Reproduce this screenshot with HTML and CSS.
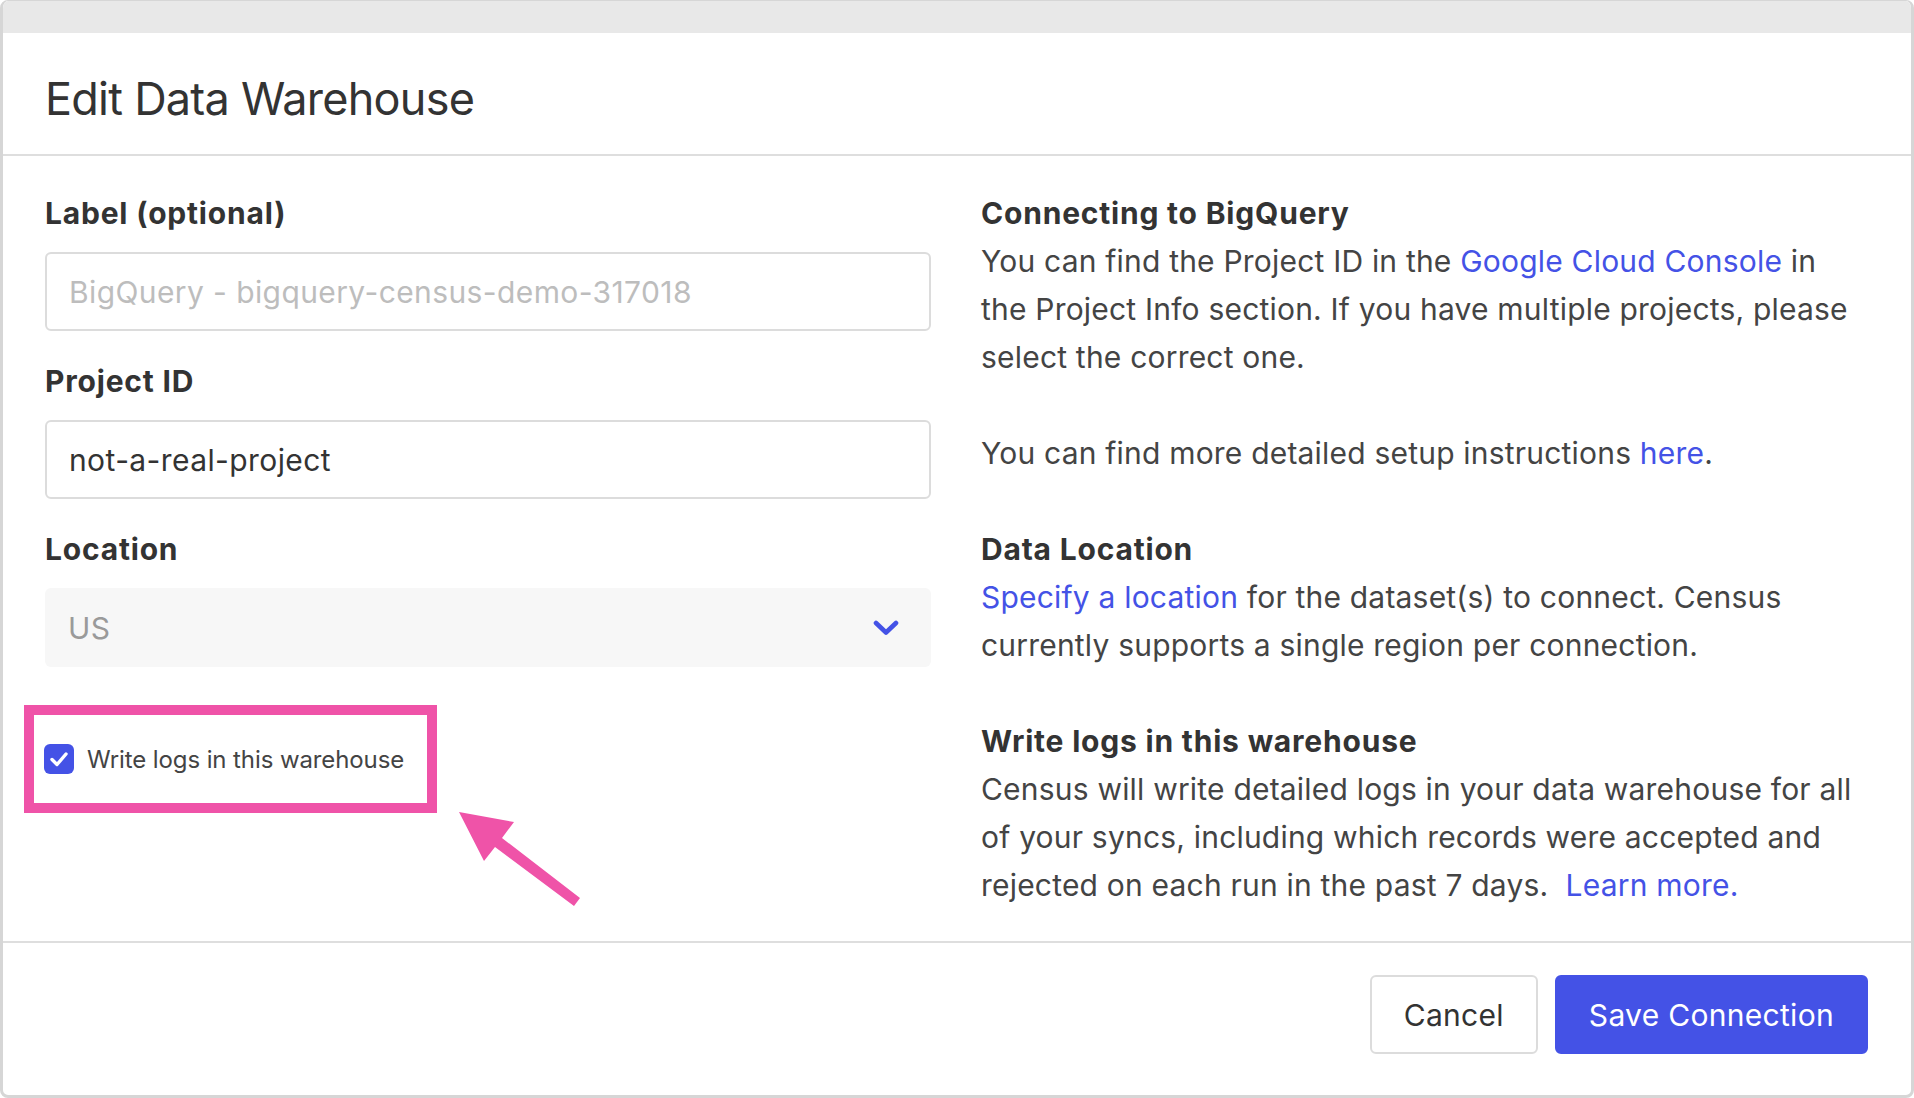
FILE: index.html
```html
<!DOCTYPE html>
<html lang="en">
<head>
<meta charset="utf-8">
<title>Edit Data Warehouse</title>
<link rel="stylesheet" href="styles.css">
</head>
<body>
<div class="modal">
  <div class="topbar"></div>
  <header class="modal-header">
    <h1 class="title">Edit Data Warehouse</h1>
  </header>
  <div class="modal-body">
    <div class="form-col">
      <label class="field-label" for="label">Label (optional)</label>
      <input id="label" class="text-input" type="text" placeholder="BigQuery - bigquery-census-demo-317018">
      <label class="field-label" for="project">Project ID</label>
      <input id="project" class="text-input" type="text" value="not-a-real-project">
      <label class="field-label">Location</label>
      <div class="select">
        <span class="select-value">US</span>
        <svg class="chevron" width="26" height="16" viewBox="0 0 26 16"><polyline points="3,3 13,12.5 23,3" fill="none" stroke="#4452e6" stroke-width="4.6" stroke-linecap="round" stroke-linejoin="round"/></svg>
      </div>
      <div class="highlight">
        <span class="checkbox"><svg width="30" height="30" viewBox="0 0 30 30"><polyline points="8,15.5 13,20.5 22,10" fill="none" stroke="#fff" stroke-width="3.4" stroke-linecap="round" stroke-linejoin="round"/></svg></span>
        <span class="check-label">Write logs in this warehouse</span>
      </div>
    </div>
    <div class="help-col">
      <section class="help">
        <h3 class="help-title">Connecting to BigQuery</h3>
        <p class="help-text">You can find the Project ID in the <a class="link" href="#">Google Cloud Console</a> in<br>the Project Info section. If you have multiple projects, please<br>select the correct one.</p>
      </section>
      <section class="help">
        <p class="help-text">You can find more detailed setup instructions <a class="link" href="#">here</a>.</p>
      </section>
      <section class="help">
        <h3 class="help-title">Data Location</h3>
        <p class="help-text"><a class="link" href="#">Specify a location</a> for the dataset(s) to connect. Census<br>currently supports a single region per connection.</p>
      </section>
      <section class="help">
        <h3 class="help-title">Write logs in this warehouse</h3>
        <p class="help-text">Census will write detailed logs in your data warehouse for all<br>of your syncs, including which records were accepted and<br>rejected on each run in the past 7 days.&nbsp; <a class="link" href="#">Learn more.</a></p>
      </section>
    </div>
  </div>
  <footer class="modal-footer">
    <button class="btn btn-secondary" type="button">Cancel</button>
    <button class="btn btn-primary" type="button">Save Connection</button>
  </footer>
  <svg class="annot-arrow" width="140" height="110" viewBox="0 0 140 110"><polygon points="7,8 62,18 50,34 128,94 122,102 43,43 32,57" fill="#ef53a8"/></svg>
</div>
</body>
</html>
```
FILE: styles.css
```css
* { box-sizing: border-box; }
html, body { margin: 0; padding: 0; background: #fff; }
body {
  font-family: Inter, "Noto Sans", "Liberation Sans", sans-serif;
  color: #444;
}
.modal {
  position: relative;
  width: 1914px;
  height: 1098px;
  border: 3px solid #d6d6d6;
  border-top-width: 1px;
  border-radius: 8px;
  overflow: hidden;
  background: #fff;
  display: flex;
  flex-direction: column;
}
.topbar {
  height: 32px;
  background: #e8e8e8;
  flex: none;
}
.modal-header {
  padding: 39px 42px 28px;
  border-bottom: 2px solid #dedede;
}
.title {
  margin: 0;
  font-size: 45px;
  line-height: 54px;
  font-weight: 400;
  color: #333;
  letter-spacing: -0.75px;
}
.modal-body {
  display: grid;
  grid-template-columns: 1fr 1fr;
  column-gap: 50px;
  padding: 33px 44px 32px 42px;
  border-bottom: 2px solid #dedede;
}
.form-col {
  display: flex;
  flex-direction: column;
  align-items: stretch;
}
.field-label {
  display: block;
  font-size: 30px;
  line-height: 48px;
  font-weight: 700;
  letter-spacing: 0.8px;
  color: #333;
  margin-bottom: 15px;
}
.text-input {
  display: block;
  height: 79px;
  width: 100%;
  border: 2px solid #dcdcdc;
  border-radius: 6px;
  padding: 0 22px;
  font-family: inherit;
  font-size: 30px;
  letter-spacing: 0.4px;
  color: #333;
  background: #fff;
  margin: 0 0 26px;
  outline: none;
}
.text-input::placeholder { color: #bdbdbd; opacity: 1; }
.select {
  height: 79px;
  border-radius: 6px;
  background: #f7f7f7;
  display: flex;
  align-items: center;
  justify-content: space-between;
  padding: 0 32px 0 23px;
}
.select-value {
  font-size: 30px;
  letter-spacing: 0.4px;
  color: #9a9a9a;
}
.chevron { display: block; }
.highlight {
  align-self: flex-start;
  margin: 38px 0 0 -21px;
  border: 10px solid #ef53a8;
  height: 108px;
  padding: 0 23px 0 10px;
  display: flex;
  align-items: center;
  gap: 13px;
}
.checkbox {
  width: 30px;
  height: 30px;
  border-radius: 6px;
  background: #4452e6;
  display: block;
}
.checkbox svg { display: block; }
.check-label {
  font-size: 24px;
  letter-spacing: -0.1px;
  color: #444;
}
.help-col { min-width: 0; }
.help {
  margin: 0 0 48px;
}
.help:last-child { margin-bottom: 0; }
.help-title {
  margin: 0;
  font-size: 30px;
  line-height: 48px;
  font-weight: 700;
  letter-spacing: 0.8px;
  color: #333;
}
.help-text {
  margin: 0;
  font-size: 30px;
  line-height: 48px;
  letter-spacing: 0.2px;
  color: #444;
  white-space: nowrap;
}
.link {
  color: #4452e6;
  text-decoration: none;
}
.modal-footer {
  margin-top: auto;
  padding: 32px 43px 41px 42px;
  display: flex;
  justify-content: flex-end;
  gap: 17px;
}
.btn {
  height: 79px;
  border-radius: 6px;
  font-family: inherit;
  font-size: 30px;
  letter-spacing: 0.3px;
  padding: 0 32px;
  cursor: pointer;
}
.btn-secondary {
  background: #fff;
  border: 2px solid #dcdcdc;
  color: #333;
}
.btn-primary {
  background: #4452e6;
  border: 2px solid #4452e6;
  color: #fff;
}
.annot-arrow {
  position: absolute;
  left: 449px;
  top: 803px;
}
```
